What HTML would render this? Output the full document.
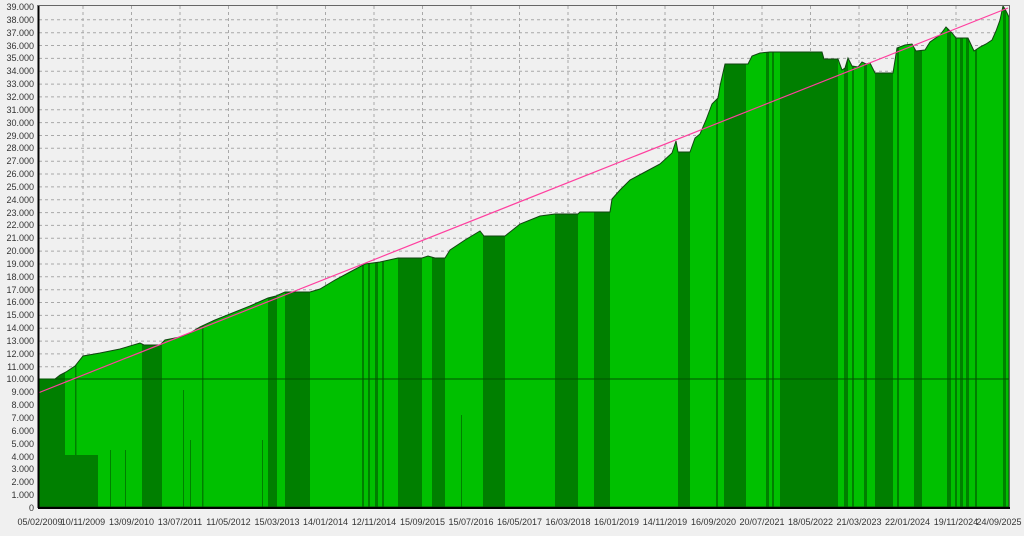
<!DOCTYPE html>
<html><head><meta charset="utf-8"><style>
html,body{margin:0;padding:0;background:#f0f0f0;width:1024px;height:536px;overflow:hidden}
svg{display:block}
text{font-family:"Liberation Sans",sans-serif;font-size:9px;fill:#333}
</style></head><body>
<svg width="1024" height="536" viewBox="0 0 1024 536" xmlns="http://www.w3.org/2000/svg">
<rect x="0" y="0" width="1024" height="536" fill="#f0f0f0"/>
<g stroke="#a8a8a8" stroke-width="1" stroke-dasharray="3,3">
<line x1="39" x2="1009" y1="19.8" y2="19.8"/><line x1="39" x2="1009" y1="32.7" y2="32.7"/><line x1="39" x2="1009" y1="45.5" y2="45.5"/><line x1="39" x2="1009" y1="58.4" y2="58.4"/><line x1="39" x2="1009" y1="71.2" y2="71.2"/><line x1="39" x2="1009" y1="84.1" y2="84.1"/><line x1="39" x2="1009" y1="96.9" y2="96.9"/><line x1="39" x2="1009" y1="109.8" y2="109.8"/><line x1="39" x2="1009" y1="122.6" y2="122.6"/><line x1="39" x2="1009" y1="135.5" y2="135.5"/><line x1="39" x2="1009" y1="148.3" y2="148.3"/><line x1="39" x2="1009" y1="161.2" y2="161.2"/><line x1="39" x2="1009" y1="174" y2="174"/><line x1="39" x2="1009" y1="186.9" y2="186.9"/><line x1="39" x2="1009" y1="199.7" y2="199.7"/><line x1="39" x2="1009" y1="212.6" y2="212.6"/><line x1="39" x2="1009" y1="225.4" y2="225.4"/><line x1="39" x2="1009" y1="238.3" y2="238.3"/><line x1="39" x2="1009" y1="251.1" y2="251.1"/><line x1="39" x2="1009" y1="264" y2="264"/><line x1="39" x2="1009" y1="276.8" y2="276.8"/><line x1="39" x2="1009" y1="289.7" y2="289.7"/><line x1="39" x2="1009" y1="302.5" y2="302.5"/><line x1="39" x2="1009" y1="315.4" y2="315.4"/><line x1="39" x2="1009" y1="328.2" y2="328.2"/><line x1="39" x2="1009" y1="341.1" y2="341.1"/><line x1="39" x2="1009" y1="353.9" y2="353.9"/><line x1="39" x2="1009" y1="366.8" y2="366.8"/>
<line y1="6" y2="507" x1="83" x2="83"/><line y1="6" y2="507" x1="131.5" x2="131.5"/><line y1="6" y2="507" x1="180" x2="180"/><line y1="6" y2="507" x1="228.5" x2="228.5"/><line y1="6" y2="507" x1="277" x2="277"/><line y1="6" y2="507" x1="325.5" x2="325.5"/><line y1="6" y2="507" x1="374" x2="374"/><line y1="6" y2="507" x1="422.5" x2="422.5"/><line y1="6" y2="507" x1="471" x2="471"/><line y1="6" y2="507" x1="519.5" x2="519.5"/><line y1="6" y2="507" x1="568" x2="568"/><line y1="6" y2="507" x1="616.5" x2="616.5"/><line y1="6" y2="507" x1="665" x2="665"/><line y1="6" y2="507" x1="713.5" x2="713.5"/><line y1="6" y2="507" x1="762" x2="762"/><line y1="6" y2="507" x1="810.5" x2="810.5"/><line y1="6" y2="507" x1="859" x2="859"/><line y1="6" y2="507" x1="907.5" x2="907.5"/><line y1="6" y2="507" x1="956" x2="956"/>
</g>
<clipPath id="c"><polygon id="eq" points="38,379 55,379 60,375 66,372 75,366 83,356 100,353 120,349 140,343 144,345 160,345 165,340 180,337 190,333 200,327 215,320 230,314 250,306 268,298 276,296 285,292 310,292 320,289 335,280 350,272 365,264 380,262 398,258 422,258 428,256 435,258 445,258 450,250 465,240 480,231 484,236 505,236 520,224 540,216 555,214 578,214 580,212 610,212 612,199 620,190 630,180 645,172 660,164 672,153 676,141 678,152 690,152 695,138 700,134 706,120 712,104 718,98 720,86 725,64 748,64 752,56 760,53 770,52 780,52 822,52 824,59 838,59 842,70 845,68 848,58 852,66 858,67 862,62 866,64 870,63 875,73 893,73 897,48 905,45 912,44 916,51 925,50 930,42 940,35 946,27 952,33 956,38 968,38 974,51 980,47 986,44 992,40 996,31 1000,20 1003,6 1005,9 1007,13 1009,17 1009,507 38,507"/></clipPath>
<g clip-path="url(#c)">
<rect x="38" y="0" width="972" height="508" fill="#00c000"/>
<g fill="#007f00">
<rect x="38" y="0" width="26" height="508"/><rect x="64" y="455" width="34" height="53"/><rect x="64" y="0" width="1" height="508"/><rect x="75" y="0" width="1.5" height="508"/>
<rect x="142" y="0" width="20" height="508"/><rect x="110" y="450" width="1" height="60"/><rect x="125" y="450" width="1" height="60"/>
<rect x="183" y="390" width="1" height="120"/><rect x="190" y="440" width="1" height="70"/><rect x="202" y="0" width="1.5" height="508"/>
<rect x="262" y="440" width="1" height="70"/><rect x="268" y="0" width="9" height="508"/><rect x="285" y="0" width="25" height="508"/>
<rect x="362" y="0" width="2" height="508"/><rect x="368" y="0" width="2" height="508"/><rect x="375" y="0" width="3" height="508"/><rect x="382" y="0" width="2" height="508"/>
<rect x="398" y="0" width="24" height="508"/><rect x="432" y="0" width="13" height="508"/><rect x="461" y="415" width="1" height="95"/>
<rect x="483" y="0" width="22" height="508"/><rect x="555" y="0" width="23" height="508"/><rect x="594" y="0" width="16" height="508"/>
<rect x="678" y="0" width="12" height="508"/><rect x="688" y="0" width="2" height="508"/><rect x="716" y="0" width="2" height="508"/>
<rect x="724" y="0" width="22" height="508"/><rect x="766" y="0" width="3" height="508"/><rect x="772" y="0" width="2" height="508"/>
<rect x="780" y="0" width="58" height="508"/><rect x="844" y="0" width="4" height="508"/><rect x="852" y="0" width="2" height="508"/><rect x="864" y="0" width="3" height="508"/>
<rect x="875" y="0" width="18" height="508"/><rect x="897" y="0" width="2" height="508"/><rect x="914" y="0" width="8" height="508"/><rect x="947" y="0" width="4" height="508"/><rect x="955" y="0" width="2" height="508"/><rect x="960" y="0" width="3" height="508"/><rect x="966" y="0" width="3" height="508"/><rect x="975" y="0" width="2" height="508"/><rect x="1003" y="0" width="3" height="508"/>
</g>
</g>
<use href="#eq" fill="none" stroke="#114411" stroke-width="1"/>
<line x1="38" y1="379" x2="1009" y2="379" stroke="#005000" stroke-width="1"/>
<line x1="38" y1="393" x2="1008" y2="8" stroke="#ff3f9f" stroke-width="1.2"/>
<line x1="38.5" y1="5" x2="38.5" y2="508" stroke="#000" stroke-width="2"/>
<line x1="38" y1="5.5" x2="1010" y2="5.5" stroke="#666" stroke-width="1"/>
<line x1="1009.5" y1="5" x2="1009.5" y2="508" stroke="#666" stroke-width="1"/>
<line x1="38" y1="508" x2="1010" y2="508" stroke="#000" stroke-width="2"/>
<g text-anchor="end">
<text x="34" y="10">39.000</text><text x="34" y="23">38.000</text><text x="34" y="36">37.000</text><text x="34" y="49">36.000</text><text x="34" y="61">35.000</text><text x="34" y="74">34.000</text><text x="34" y="87">33.000</text><text x="34" y="100">32.000</text><text x="34" y="113">31.000</text><text x="34" y="126">30.000</text><text x="34" y="139">29.000</text><text x="34" y="151">28.000</text><text x="34" y="164">27.000</text><text x="34" y="177">26.000</text><text x="34" y="190">25.000</text><text x="34" y="203">24.000</text><text x="34" y="216">23.000</text><text x="34" y="228">22.000</text><text x="34" y="241">21.000</text><text x="34" y="254">20.000</text><text x="34" y="267">19.000</text><text x="34" y="280">18.000</text><text x="34" y="293">17.000</text><text x="34" y="305">16.000</text><text x="34" y="318">15.000</text><text x="34" y="331">14.000</text><text x="34" y="344">13.000</text><text x="34" y="357">12.000</text><text x="34" y="370">11.000</text><text x="34" y="382">10.000</text><text x="34" y="395">9.000</text><text x="34" y="408">8.000</text><text x="34" y="421">7.000</text><text x="34" y="434">6.000</text><text x="34" y="447">5.000</text><text x="34" y="460">4.000</text><text x="34" y="472">3.000</text><text x="34" y="485">2.000</text><text x="34" y="498">1.000</text><text x="34" y="511">0</text>
</g>
<g text-anchor="middle">
<text x="40" y="525">05/02/2009</text><text x="83" y="525">10/11/2009</text><text x="131.5" y="525">13/09/2010</text><text x="180" y="525">13/07/2011</text><text x="228.5" y="525">11/05/2012</text><text x="277" y="525">15/03/2013</text><text x="325.5" y="525">14/01/2014</text><text x="374" y="525">12/11/2014</text><text x="422.5" y="525">15/09/2015</text><text x="471" y="525">15/07/2016</text><text x="519.5" y="525">16/05/2017</text><text x="568" y="525">16/03/2018</text><text x="616.5" y="525">16/01/2019</text><text x="665" y="525">14/11/2019</text><text x="713.5" y="525">16/09/2020</text><text x="762" y="525">20/07/2021</text><text x="810.5" y="525">18/05/2022</text><text x="859" y="525">21/03/2023</text><text x="907.5" y="525">22/01/2024</text><text x="956" y="525">19/11/2024</text><text x="999" y="525">24/09/2025</text>
</g>
</svg>
</body></html>
